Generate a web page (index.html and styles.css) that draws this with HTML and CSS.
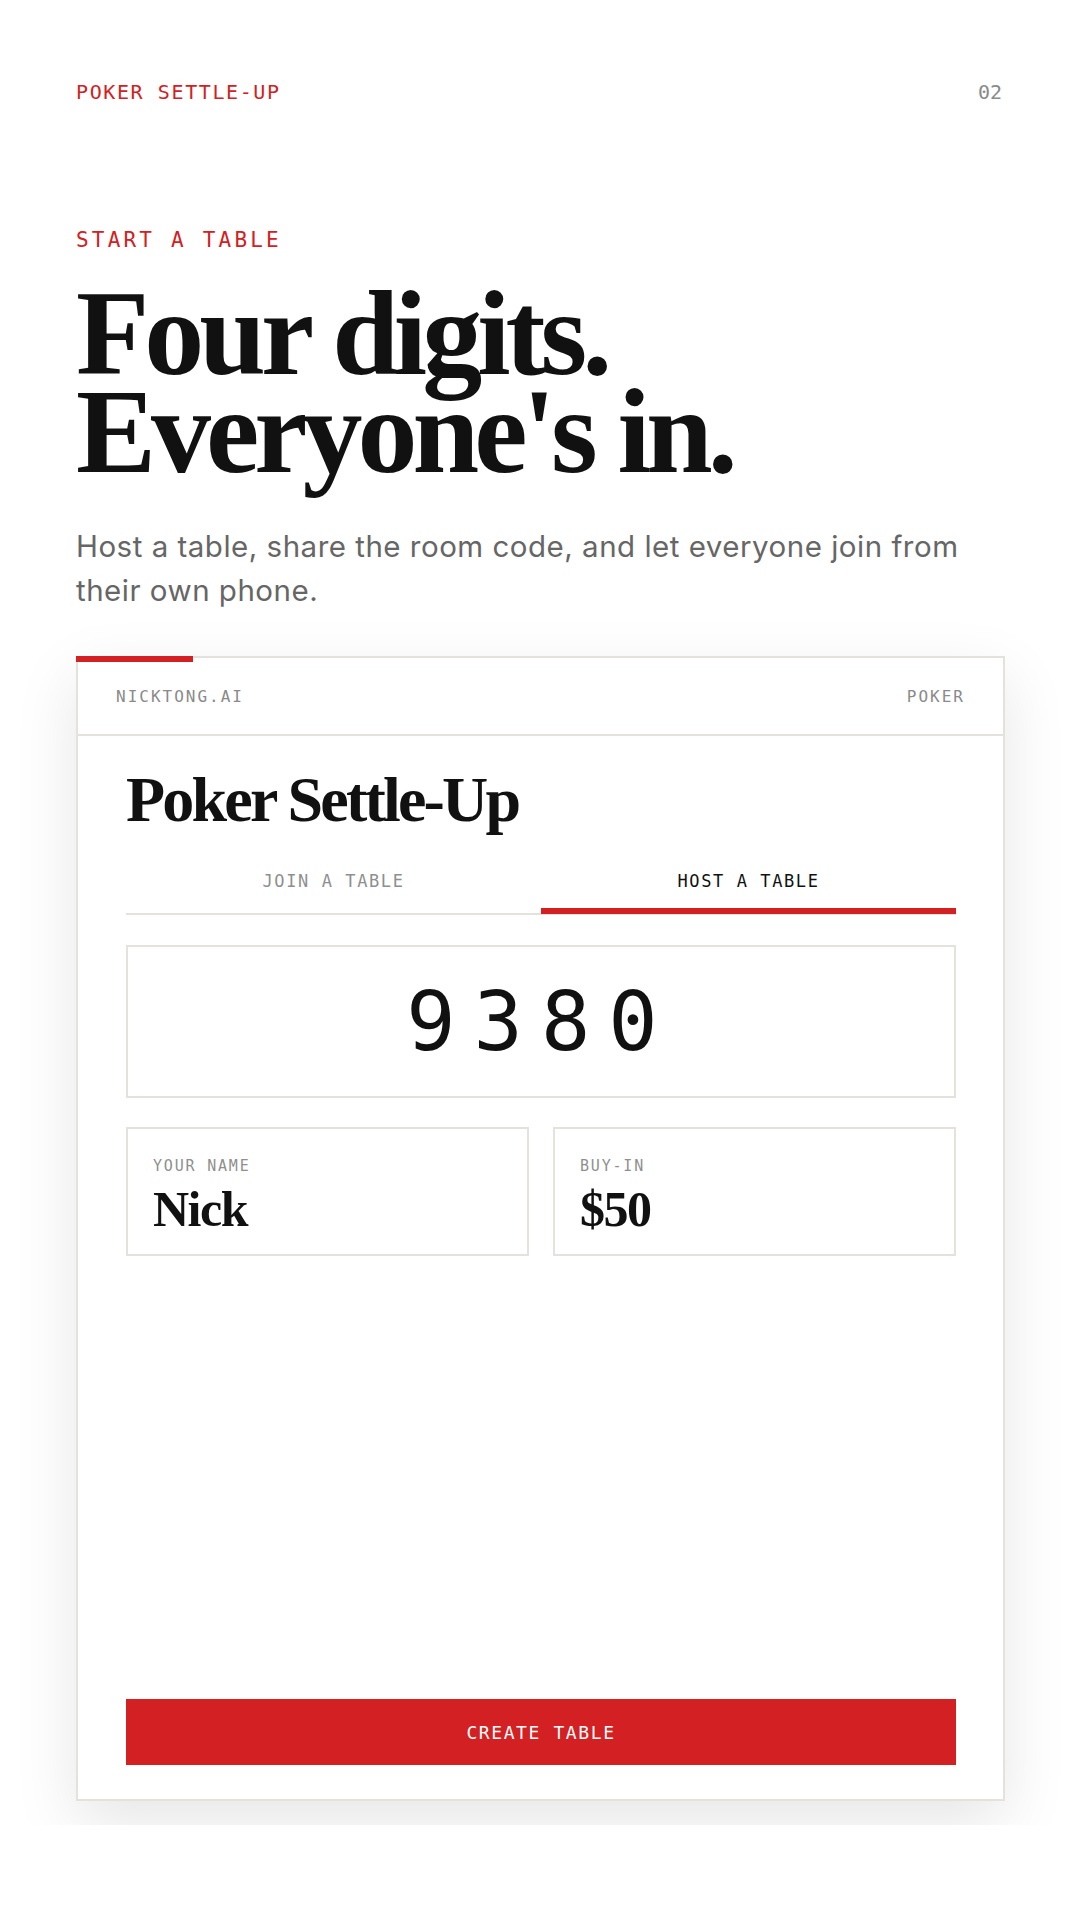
FILE: index.html
```html
<!DOCTYPE html>
<html lang="en">
<head>
<meta charset="utf-8">
<title>Poker Settle-Up</title>
<link rel="stylesheet" href="styles.css">
</head>
<body>
<div class="page">
  <div class="topbar">
    <span class="brand">POKER SETTLE-UP</span>
    <span class="pagenum">02</span>
  </div>
  <div class="eyebrow">START A TABLE</div>
  <h1 class="headline">Four digits.<br>Everyone's in.</h1>
  <p class="lede">Host a table, share the room code, and let everyone join from their own phone.</p>

  <div class="card">
    <div class="accent"></div>
    <div class="card-head">
      <span class="meta">NICKTONG.AI</span>
      <span class="meta">POKER</span>
    </div>
    <div class="card-body">
      <h2 class="app-title">Poker Settle-Up</h2>
      <div class="tabs">
        <div class="tab">JOIN A TABLE</div>
        <div class="tab active">HOST A TABLE</div>
      </div>
      <div class="code">9380</div>
      <div class="fields">
        <div class="field">
          <div class="label">YOUR NAME</div>
          <div class="value">Nick</div>
        </div>
        <div class="field">
          <div class="label">BUY-IN</div>
          <div class="value">$50</div>
        </div>
      </div>
      <button class="cta">CREATE TABLE</button>
    </div>
  </div>
</div>
</body>
</html>
```

FILE: styles.css
```css
* { box-sizing: border-box; }
html, body { margin: 0; padding: 0; background: #ffffff; }
body { font-family: "Inter", "Noto Sans", sans-serif; color: #111; }

.page {
  overflow: hidden;
  padding: 80px 78px 24px 76px;
  background: #ffffff;
}

.topbar {
  display: flex;
  justify-content: space-between;
  font-family: "DejaVu Sans Mono", "Liberation Mono", monospace;
  font-size: 20px;
  line-height: 24px;
  letter-spacing: 1.6px;
}
.brand { color: #d32022; }
.pagenum { color: #8a8a8a; letter-spacing: 0; }

.eyebrow {
  margin-top: 124px;
  font-family: "DejaVu Sans Mono", "Liberation Mono", monospace;
  font-size: 21px;
  line-height: 24px;
  letter-spacing: 3.2px;
  color: #d32022;
}

.headline {
  margin: 33px 0 0;
  font-family: "Liberation Serif", "DejaVu Serif", serif;
  font-weight: 700;
  font-size: 120px;
  line-height: 98px;
  letter-spacing: -5px;
  color: #111;
}

.lede {
  margin: 43px 0 0;
  font-family: "Inter", "Noto Sans", sans-serif;
  font-size: 29.5px;
  line-height: 44px;
  letter-spacing: 0.5px;
  color: #666;
  max-width: 900px;
}

.card {
  position: relative;
  margin-top: 44px;
  width: 929px;
  height: 1145px;
  border: 2px solid #e5e2de;
  background: #fff;
  box-shadow: 0 22px 60px rgba(0, 0, 0, 0.1);
  display: flex;
  flex-direction: column;
}
.accent {
  position: absolute;
  top: -2px;
  left: -2px;
  width: 117px;
  height: 6px;
  background: #d32022;
}

.card-head {
  height: 78px;
  display: flex;
  justify-content: space-between;
  align-items: center;
  padding: 0 38px 0 38px;
  border-bottom: 2px solid #e5e2de;
}
.meta {
  font-family: "DejaVu Sans Mono", "Liberation Mono", monospace;
  font-size: 16px;
  letter-spacing: 2px;
  color: #8a8a8a;
}

.card-body {
  flex: 1;
  display: flex;
  flex-direction: column;
  padding: 32px 47px 34px 48px;
}

.app-title {
  margin: 0;
  font-family: "Liberation Serif", "DejaVu Serif", serif;
  font-weight: 700;
  font-size: 64px;
  line-height: 64px;
  letter-spacing: -2.8px;
  color: #111;
}

.tabs {
  margin-top: 15px;
  display: grid;
  grid-template-columns: 1fr 1fr;
  border-bottom: 2px solid #e5e2de;
}
.tab {
  text-align: center;
  padding: 24px 0 17px;
  border-bottom: 6px solid transparent;
  margin-bottom: -1px;
  font-family: "DejaVu Sans Mono", "Liberation Mono", monospace;
  font-size: 17px;
  line-height: 20px;
  letter-spacing: 1.6px;
  color: #8f8f8f;
}
.tab.active {
  color: #111;
  border-bottom-color: #d32022;
}

.code {
  margin-top: 30px;
  height: 153px;
  border: 2px solid #e5e2de;
  display: flex;
  align-items: center;
  justify-content: center;
  font-family: "DejaVu Sans Mono", "Liberation Mono", monospace;
  font-size: 82px;
  letter-spacing: 18px;
  color: #111;
}

.fields {
  margin-top: 29px;
  display: grid;
  grid-template-columns: 1fr 1fr;
  gap: 24px;
}
.field {
  height: 129px;
  border: 2px solid #e5e2de;
  padding: 28px 22px 0 25px;
}
.label {
  font-family: "DejaVu Sans Mono", "Liberation Mono", monospace;
  font-size: 15px;
  line-height: 18px;
  letter-spacing: 1.8px;
  color: #8f8f8f;
}
.value {
  margin-top: 9px;
  font-family: "Liberation Serif", "DejaVu Serif", serif;
  font-weight: 700;
  font-size: 50px;
  line-height: 50px;
  letter-spacing: -1.5px;
  color: #111;
}

.cta {
  margin-top: auto;
  height: 66px;
  border: none;
  border-radius: 0;
  background: #d32022;
  color: #fff;
  font-family: "DejaVu Sans Mono", "Liberation Mono", monospace;
  font-size: 18px;
  letter-spacing: 1.6px;
  cursor: pointer;
}
```
